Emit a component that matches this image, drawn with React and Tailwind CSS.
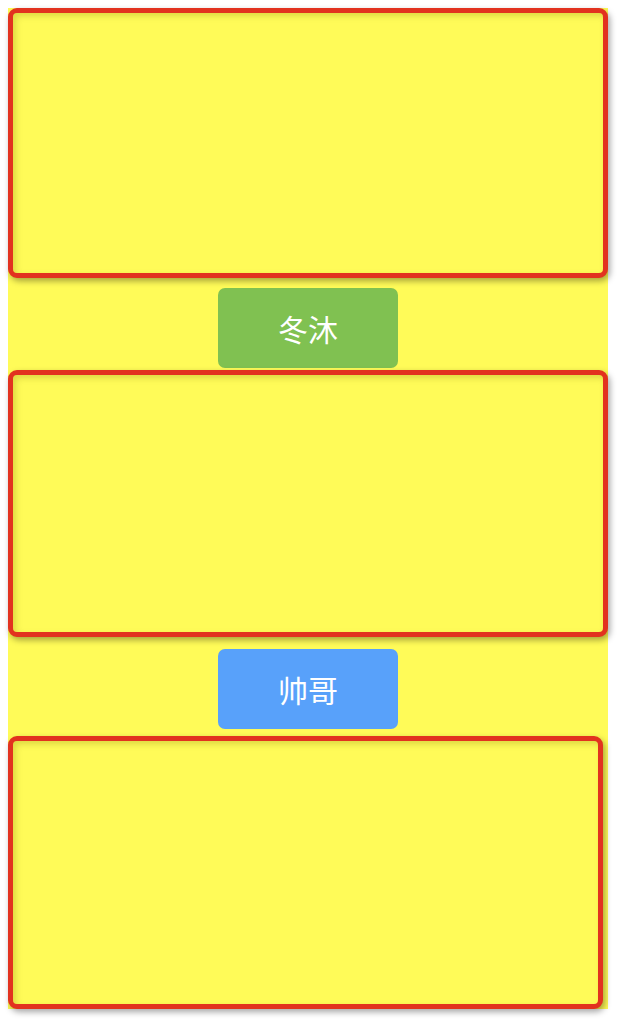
export default function App() {
    const box = "rounded-[9px] border-[5px] border-[#e2321f] bg-[#fffb58] shadow-[2px_3px_6px_rgba(0,0,0,0.35),inset_3px_3px_6px_rgba(120,110,0,0.25)]";
    const btn = "w-[180px] h-[80px] rounded-[7px] flex items-center justify-center text-white text-[30px] font-['Noto_Sans_CJK_SC',sans-serif]";

    return (
        <div className="bg-white min-h-[1020px] pt-2 pl-2">
            <div className="w-[600px] bg-[#fffb58] flex flex-col items-center">
                <div className={`${box} w-[600px] h-[270px]`} />
                <div className={`${btn} bg-[#80c151] mt-[10px]`}>冬沐</div>
                <div className={`${box} w-[600px] h-[267px] mt-[2px]`} />
                <div className={`${btn} bg-[#58a1fa] mt-[12px]`}>帅哥</div>
                <div className={`${box} w-[595px] h-[273px] mt-[7px] self-start`} />
            </div>
        </div>
    );
}
